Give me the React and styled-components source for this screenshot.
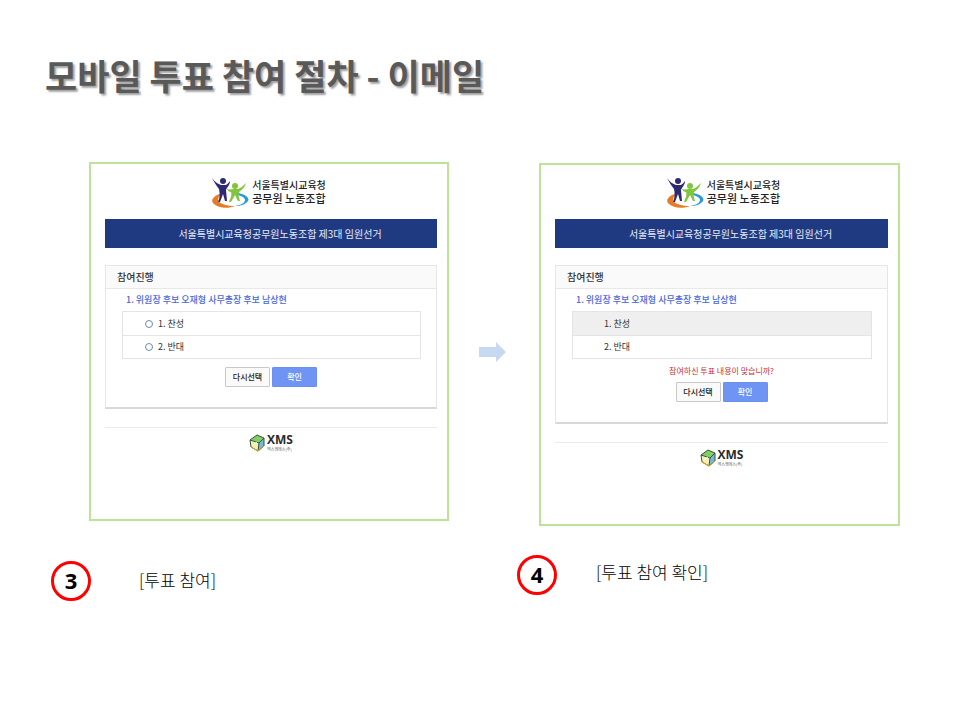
import React from "react";
import styled, { createGlobalStyle } from "styled-components";

const GlobalStyle = createGlobalStyle`
  * { box-sizing: border-box; }
  body {
    margin: 0;
    background: #fff;
    color: #000;
    font-family: "Noto Sans CJK KR", "Liberation Sans", sans-serif;
  }
`;

const Page = styled.main`
  padding: 51px 60px 40px 51px;
`;

const Title = styled.h1`
  margin: 0 0 63px -6px;
  color: #595959;
  font-size: 35px;
  line-height: 48px;
  font-weight: 700;
  text-shadow: 2px 2px 2px #a0a0a0;
`;

const Steps = styled.div`
  display: grid;
  grid-template-columns: minmax(0, 398fr) 68px minmax(0, 383fr);
  align-items: start;
`;

const Step = styled.section`
  padding-top: ${(p) => p.$top}px;
`;

const Screen = styled.div`
  margin-left: ${(p) => p.$indent}px;
  padding: ${(p) => p.$top}px 10px ${(p) => p.$bottom}px 14px;
  border: 2px solid #bde398;
`;

const UnionLogo = styled.div`
  display: flex;
  justify-content: center;
  gap: 3px;
  height: 31px;
  padding-left: ${(p) => p.$start}px;
  padding-right: ${(p) => p.$end}px;
  margin-bottom: 11px;
`;

const UnionName = styled.div`
  padding-top: 1px;
  color: #222;
  font-weight: 500;
  font-size: 10px;
  line-height: 14px;
`;

const UnionNameMain = styled.div`
  font-size: 11px;
  line-height: 13px;
`;

const Banner = styled.h2`
  margin: 0 0 17px;
  padding-left: 18px;
  background: #203a82;
  color: #e8ecf6;
  text-align: center;
  font-size: 10px;
  line-height: 29px;
  font-weight: 400;
`;

const Panel = styled.form`
  border: 1px solid #e6e6e6;
  border-bottom: 2px solid #d8d8d8;
  padding-bottom: 20px;
`;

const PanelHeader = styled.h3`
  margin: 0;
  padding-left: 11px;
  border-bottom: 1px solid #e8e8e8;
  background: #fafafa;
  color: #333;
  font-size: 10px;
  line-height: 22px;
  font-weight: 500;
`;

const Question = styled.p`
  margin: 0;
  padding-left: 20px;
  color: #4669d8;
  font-size: 9px;
  line-height: 22px;
  font-weight: 500;
`;

const Options = styled.div`
  margin: 0 15px 0 16px;
  border: 1px solid #e4e4e4;
`;

const Option = styled.label`
  display: flex;
  align-items: center;
  gap: 5px;
  height: 23px;
  padding-left: ${(p) => (p.$plain ? 31 : 22)}px;
  background: ${(p) => (p.$chosen ? "#efefef" : "#fff")};
  color: #333;
  font-size: 9px;
  line-height: 20px;
  & + & {
    border-top: 1px solid #e4e4e4;
  }
`;

const Radio = styled.input`
  appearance: none;
  width: 8px;
  height: 8px;
  margin: 0;
  border: 1px solid #6f8ba3;
  border-radius: 50%;
  background: #fff;
  &:checked {
    background: #4669d8;
  }
`;

const Confirm = styled.p`
  margin: 0;
  color: #c8323a;
  text-align: center;
  font-size: 8px;
  line-height: 23px;
`;

const Actions = styled.div`
  display: flex;
  justify-content: center;
  gap: 2px;
  padding-top: ${(p) => p.$top}px;
`;

const Button = styled.button`
  width: 45px;
  height: 20px;
  padding: 0;
  border: 1px solid ${(p) => (p.$primary ? "#6b90f0" : "#c8c8c8")};
  border-radius: 1px;
  background: ${(p) => (p.$primary ? "#6f94f4" : "#fafafa")};
  color: ${(p) => (p.$primary ? "#fff" : "#222")};
  font-family: inherit;
  font-size: 8px;
  line-height: 16px;
  font-weight: 500;
`;

const Footer = styled.footer`
  display: flex;
  justify-content: center;
  gap: 2px;
  margin-top: 18px;
  padding-top: 6px;
  border-top: 1px solid #ebebeb;
`;

const VendorName = styled.div`
  color: #2c2c2c;
  font-family: "Open Sans", sans-serif;
  font-size: 12px;
  line-height: 12px;
  font-weight: 700;
`;

const VendorSub = styled.div`
  color: #666;
  font-family: "Noto Sans CJK KR", sans-serif;
  font-size: 4px;
  line-height: 6px;
  font-weight: 400;
`;

const ArrowSlot = styled.div`
  padding: 180px 0 0 30px;
  line-height: 0;
`;

const Caption = styled.div`
  display: flex;
  gap: ${(p) => p.$gap}px;
  padding-top: ${(p) => p.$top}px;
`;

const StepNumber = styled.span`
  width: 40px;
  height: 40px;
  border: 3px solid #fe0000;
  border-radius: 50%;
  text-align: center;
  font-family: "Open Sans", sans-serif;
  font-size: 22px;
  line-height: 33px;
  font-weight: 700;
`;

const StepLabel = styled.span`
  font-size: 17px;
  line-height: ${(p) => p.$line}px;
  font-weight: 300;
`;

function UnionMark() {
  return (
    <svg width="37" height="31" viewBox="0 0 37 31" aria-hidden="true">
      <path d="M8 17C1 19-2 24 2 27c4 4 14 5 21 2-7 0-16-2-17-6 0-2 1-4 3-5z" fill="#e87b25" />
      <path d="M26 16c7 1 12 5 10 8-2 3-7 5-13 5 6-1 10-3 10-6 0-2-3-4-7-5z" fill="#2b9bd6" />
      <path d="M0 1c3 4 6 6 9 7h5c2-1 3-3 4-4 0 4-3 6-4 9l1 11h-2l-2-7-3 8H6c2-5 2-8 1-13C4 8 2 5 0 1z" fill="#2c2a72" />
      <circle cx="11" cy="4" r="3" fill="#2c2a72" />
      <path d="M15 12c3 1 5 0 7 0h4c3-1 5-3 8-6-1 4-4 7-7 9-1 3 0 6 1 9h-2l-3-6-4 7h-2c2-5 3-7 2-10-2 0-3-1-4-3z" fill="#7fc63c" />
      <circle cx="23" cy="9" r="3" fill="#7fc63c" />
    </svg>
  );
}

function VendorMark() {
  return (
    <svg width="16" height="18" viewBox="0 0 16 18" aria-hidden="true">
      <path d="M1 6l7-5 7 3-5 5z" fill="#7fd060" />
      <path d="M1 6l9 3-1 8-7-4z" fill="#f7efb0" />
      <path d="M10 9l5-5v8l-6 5z" fill="#76b9dc" />
      <path d="M1 6l7-5 7 3v8l-6 5-7-4zM1 6l9 3 5-5M10 9l-1 8" fill="none" stroke="#3a5340" strokeWidth="1" />
      <path d="M2 13l7 4 6-5" fill="none" stroke="#d9a72c" strokeWidth="1" />
      <path d="M4 11l4-3" stroke="#fff" strokeWidth="1" />
    </svg>
  );
}

function Ballot({ indent, top, bottom, logoStart = 0, logoEnd = 0, review = false }) {
  const group = review ? "review" : "vote";
  return (
    <Screen $indent={indent} $top={top} $bottom={bottom}>
      <UnionLogo $start={logoStart} $end={logoEnd}>
        <UnionMark />
        <UnionName>
          서울특별시교육청
          <UnionNameMain>공무원 노동조합</UnionNameMain>
        </UnionName>
      </UnionLogo>
      <Banner>서울특별시교육청공무원노동조합 제3대 임원선거</Banner>
      <Panel onSubmit={(e) => e.preventDefault()}>
        <PanelHeader>참여진행</PanelHeader>
        <Question>1. 위원장 후보 오재형 사무총장 후보 남상현</Question>
        <Options>
          {["1. 찬성", "2. 반대"].map((text, i) => (
            <Option key={text} as={review ? "div" : "label"} $plain={review} $chosen={review && i === 0}>
              {!review && <Radio type="radio" name={group} value={i + 1} />}
              {text}
            </Option>
          ))}
        </Options>
        {review && <Confirm>참여하신 투표 내용이 맞습니까?</Confirm>}
        <Actions $top={review ? 0 : 8}>
          <Button type="reset">다시선택</Button>
          <Button type="submit" $primary>확인</Button>
        </Actions>
      </Panel>
      <Footer>
        <VendorMark />
        <VendorName>
          XMS
          <VendorSub>엑스엠에스(주)</VendorSub>
        </VendorName>
      </Footer>
    </Screen>
  );
}

export default function App() {
  return (
    <>
      <GlobalStyle />
      <Page>
        <Title>모바일 투표 참여 절차 - 이메일</Title>
        <Steps>
          <Step $top={0}>
            <Ballot indent={38} top={13} bottom={67} logoEnd={4} />
            <Caption $top={40} $gap={48}>
              <StepNumber>3</StepNumber>
              <StepLabel $line={38}>[투표 참여]</StepLabel>
            </Caption>
          </Step>
          <ArrowSlot>
            <svg width="27" height="20" viewBox="0 0 27 20" aria-hidden="true">
              <path d="M0 5h17V0l10 10-10 10v-5H0z" fill="#c6d9f1" />
            </svg>
          </ArrowSlot>
          <Step $top={1}>
            <Ballot indent={22} top={12} bottom={57} logoStart={4} review />
            <Caption $top={29} $gap={39}>
              <StepNumber>4</StepNumber>
              <StepLabel $line={34}>[투표 참여 확인]</StepLabel>
            </Caption>
          </Step>
        </Steps>
      </Page>
    </>
  );
}
